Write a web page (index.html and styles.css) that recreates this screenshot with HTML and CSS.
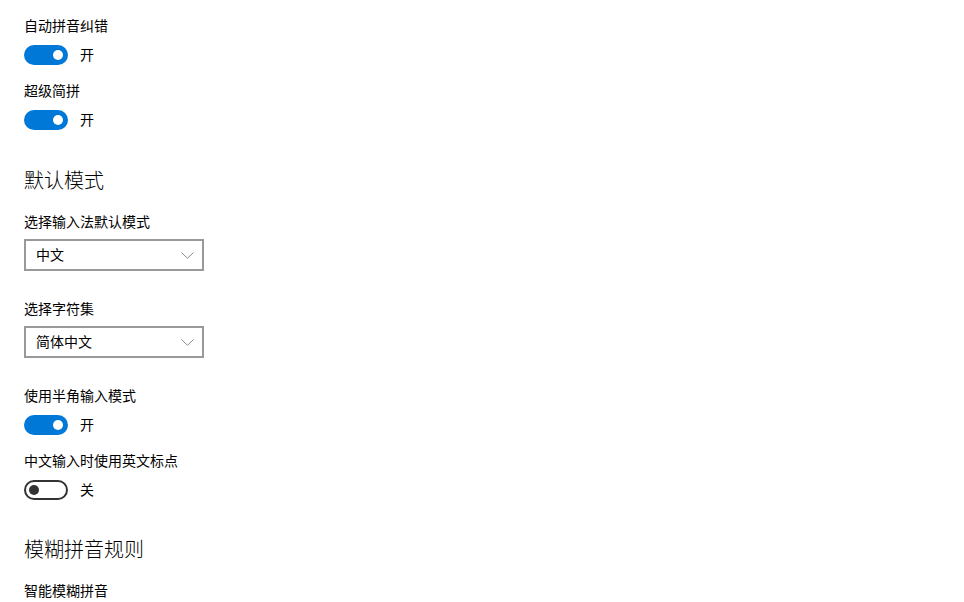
FILE: index.html
```html
<!DOCTYPE html>
<html lang="zh-CN">
<head>
<meta charset="utf-8">
<title>设置</title>
<link rel="stylesheet" href="styles.css">
</head>
<body>
<main class="page">
  <div class="setting">
    <div class="label">自动拼音纠错</div>
    <div class="toggle-row"><span class="toggle on"><span class="thumb"></span></span><span class="state">开</span></div>
  </div>
  <div class="setting s-next">
    <div class="label">超级简拼</div>
    <div class="toggle-row"><span class="toggle on"><span class="thumb"></span></span><span class="state">开</span></div>
  </div>

  <h2 class="heading h-first">默认模式</h2>
  <div class="setting s-after-h">
    <div class="label">选择输入法默认模式</div>
    <div class="select"><span class="select-text">中文</span>
      <svg class="chev" width="13" height="7" viewBox="0 0 13 7"><path d="M0.5 0.5 L6.5 6.3 L12.5 0.5" fill="none" stroke="#8a8a8a" stroke-width="1"/></svg>
    </div>
  </div>
  <div class="setting s-after-sel">
    <div class="label">选择字符集</div>
    <div class="select"><span class="select-text">简体中文</span>
      <svg class="chev" width="13" height="7" viewBox="0 0 13 7"><path d="M0.5 0.5 L6.5 6.3 L12.5 0.5" fill="none" stroke="#8a8a8a" stroke-width="1"/></svg>
    </div>
  </div>
  <div class="setting s-after-sel">
    <div class="label">使用半角输入模式</div>
    <div class="toggle-row"><span class="toggle on"><span class="thumb"></span></span><span class="state">开</span></div>
  </div>
  <div class="setting s-next">
    <div class="label">中文输入时使用英文标点</div>
    <div class="toggle-row"><span class="toggle off"><span class="thumb"></span></span><span class="state">关</span></div>
  </div>

  <h2 class="heading h-second">模糊拼音规则</h2>
  <div class="setting s-after-h2">
    <div class="label">智能模糊拼音</div>
  </div>
</main>
</body>
</html>
```

FILE: styles.css
```css
html, body {
  margin: 0;
  padding: 0;
  background: #ffffff;
}
body {
  font-family: "Noto Sans CJK SC", "Noto Sans", sans-serif;
  color: #000000;
  overflow: hidden;
}
.page {
  display: flex;
  flex-direction: column;
  padding: 16px 0 0 24px;
}
.setting {
  display: flex;
  flex-direction: column;
}
.label {
  font-size: 14px;
  line-height: 18px;
  height: 20px;
}
.toggle-row {
  display: flex;
  align-items: center;
  margin-top: 9px;
  height: 20px;
}
.toggle {
  position: relative;
  box-sizing: border-box;
  width: 44px;
  height: 20px;
  border-radius: 10px;
  display: inline-block;
}
.toggle.on {
  background: #0078d7;
}
.toggle.off {
  border: 2px solid #333333;
  background: #ffffff;
}
.thumb {
  position: absolute;
  top: 5px;
  width: 10px;
  height: 10px;
  border-radius: 50%;
}
.toggle.on .thumb {
  right: 5px;
  background: #ffffff;
}
.toggle.off .thumb {
  top: 3px;
  left: 3px;
  background: #333333;
}
.state {
  margin-left: 12px;
  font-size: 14px;
  line-height: 18px;
  padding-bottom: 2px;
}
.s-next { margin-top: 16px; }
.heading {
  margin: 0;
  font-weight: 300;
  font-size: 20px;
  line-height: 26px;
  height: 28px;
  color: #000000;
}
.h-first { margin-top: 37px; }
.h-second { margin-top: 36px; }
.s-after-h { margin-top: 17px; }
.s-after-h2 { margin-top: 17px; }
.s-after-sel { margin-top: 28px; }
.select {
  box-sizing: border-box;
  margin-top: 7px;
  width: 180px;
  height: 32px;
  border: 2px solid #999999;
  display: flex;
  align-items: center;
  justify-content: space-between;
  padding: 0 8px 0 10px;
}
.select-text {
  font-size: 14px;
  line-height: 18px;
  padding-bottom: 2px;
}
.chev {
  display: block;
}
```
